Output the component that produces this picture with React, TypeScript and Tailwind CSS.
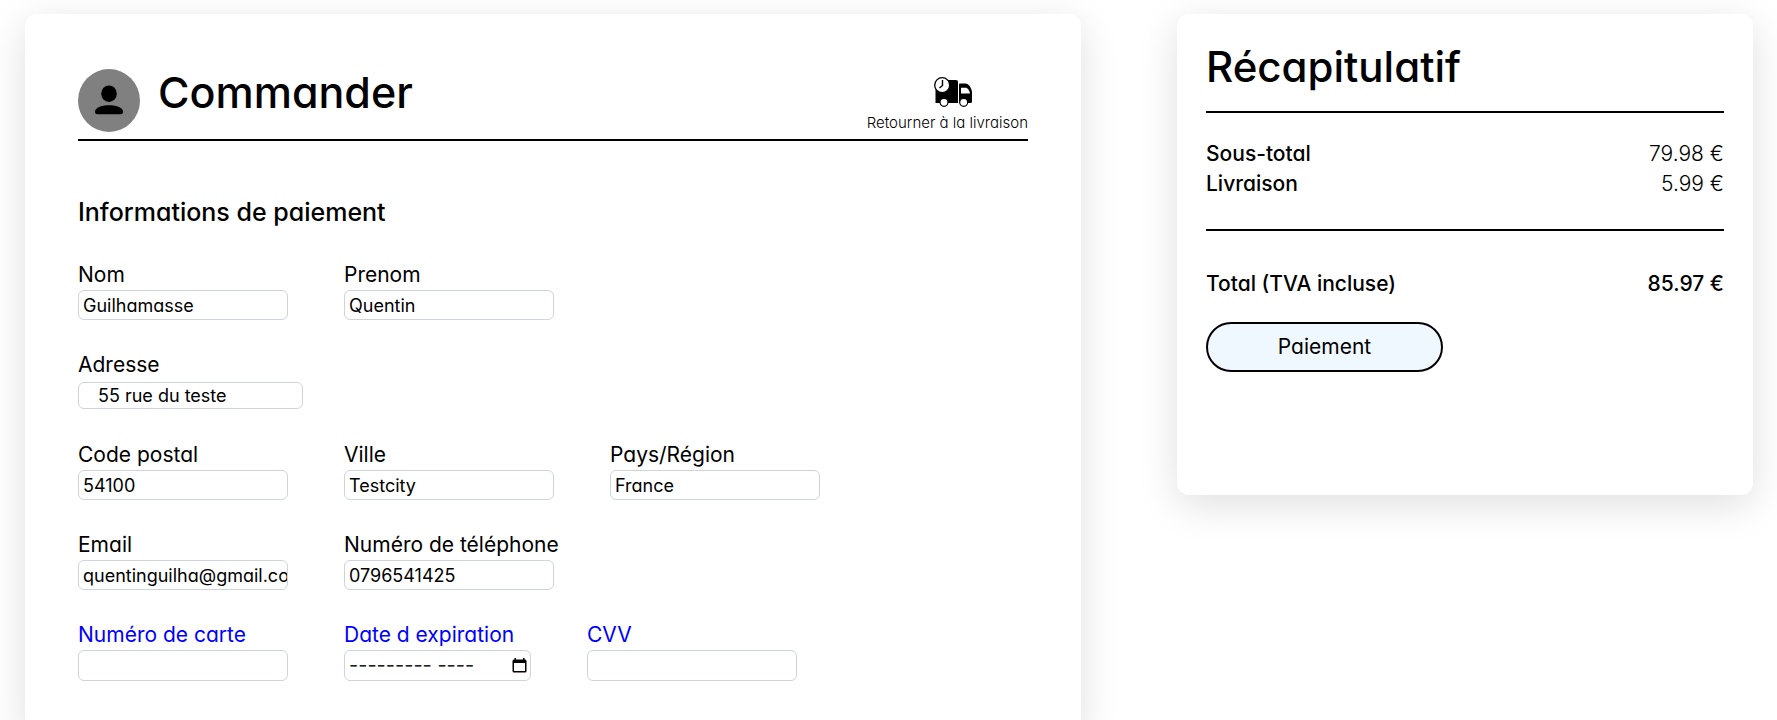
import type { InputHTMLAttributes, ReactNode } from "react";

type FieldProps = InputHTMLAttributes<HTMLInputElement> & {
  id: string;
  label: string;
  highlight?: boolean;
  adornment?: ReactNode;
};

function Field({
  id,
  label,
  highlight = false,
  adornment,
  className = "h-[30px] w-[210px] px-1",
  ...rest
}: FieldProps) {
  return (
    <div className="flex flex-col">
      <label
        htmlFor={id}
        className={
          highlight
            ? "h-[30px] w-0 text-[21px] leading-[29px] whitespace-nowrap text-[#0000ff]"
            : "h-[30px] w-0 text-[21px] leading-[29px] whitespace-nowrap text-black"
        }
      >
        {label}
      </label>
      <div className="relative flex h-[31px] flex-col">
        <input
          id={id}
          {...rest}
          className={`rounded-md border border-[#ced4da] bg-white text-lg font-[370] text-black placeholder:text-xl placeholder:font-normal placeholder:text-[#222222] ${className}`}
        />
        {adornment}
      </div>
    </div>
  );
}

function CalendarButton() {
  return (
    <button type="button" aria-label="Choisir une date" className="absolute top-2 right-1">
      <svg viewBox="0 0 15 15" className="size-[15px]" aria-hidden="true">
        <path d="M2.500 0H4V1.500H11V0H12.500V1.500H13Q14.500 1.500 14.500 3V13Q14.500 14.500 13 14.500H2Q0.500 14.500 0.500 13V3Q0.500 1.500 2 1.500H2.500ZM2 5V13H13V5Z" fill="#000" fillRule="evenodd" />
      </svg>
    </button>
  );
}

function TruckIcon() {
  return (
    <svg viewBox="0 0 38 30" className="ml-3 h-[30px] w-[38px]" aria-hidden="true">
      <path d="M1.5 5Q1.5 3 3.500 3H22Q24 3 24 5V26H1.500Z" fill="#000" />
      <path d="M25 7.500Q25 6.500 26 6.500H31.500C34.500 6.500 38 11.500 38 15.500V24.500Q38 26 36.500 26H25Z" fill="#000" />
      <path d="M27 10.800H31.500C33.500 10.800 35.500 13.500 36 16.500H27Z" fill="#fff" />
      <circle cx="8.200" cy="8.200" r="7.500" fill="#fff" stroke="#000" strokeWidth="1.300" />
      <path d="M8.500 3V8.500L5.500 11" fill="none" stroke="#000" strokeWidth="1.400" />
      <circle cx="10" cy="25.300" r="4" fill="#fff" stroke="#000" strokeWidth="1.200" />
      <circle cx="29.700" cy="25.300" r="4" fill="#fff" stroke="#000" strokeWidth="1.200" />
    </svg>
  );
}

function Avatar() {
  return (
    <svg viewBox="0 0 62 63" className="h-[63px] w-[62px]" role="img" aria-label="Profil">
      <ellipse cx="31" cy="31.500" rx="31" ry="31.500" fill="#808080" />
      <ellipse cx="31" cy="24.700" rx="7.800" ry="8.300" fill="#000" />
      <path d="M17 42.700C17 38.700 23 36.200 31 36.200S45 38.700 45 42.700Q45 45.200 42.500 45.200H19.500Q17 45.200 17 42.700Z" fill="#000" />
    </svg>
  );
}

export default function App() {
  return (
    <main className="grid h-screen grid-cols-[11fr_6fr] items-start gap-24 overflow-hidden bg-white pt-3.5 pr-6 pl-[25px] font-['Inter',sans-serif] text-black [font-feature-settings:'cv11']">
      <section className="min-h-screen rounded-xl bg-white px-[53px] pt-[55px] pb-12 shadow-[0_10px_40px_rgba(0,0,0,0.13)]">
        <header className="flex h-[72px] justify-between border-b-2 border-black">
          <div className="flex gap-[18px]">
            <Avatar />
            <h1 className="text-[43px] leading-[46px] font-medium">Commander</h1>
          </div>
          <a href="#livraison" className="flex flex-col items-center pt-2 text-[15px] font-[350]">
            <TruckIcon />
            <span className="leading-8">Retourner à la livraison</span>
          </a>
        </header>

        <form id="paiement" className="pt-[55px]">
          <h2 className="text-[25px] leading-8 font-medium">Informations de paiement</h2>
          <div className="flex flex-col gap-[29px] pt-8">
            <div className="flex gap-14">
              <Field id="nom" label="Nom" defaultValue="Guilhamasse" />
              <Field id="prenom" label="Prenom" defaultValue="Quentin" />
            </div>
            <Field id="adresse" label="Adresse" defaultValue="55 rue du teste" className="my-0.5 h-[27px] w-[225px] px-[19px]" />
            <div className="flex gap-14">
              <Field id="code" label="Code postal" defaultValue="54100" />
              <Field id="ville" label="Ville" defaultValue="Testcity" />
              <Field id="pays" label="Pays/Région" defaultValue="France" />
            </div>
            <div className="flex gap-14">
              <Field id="email" label="Email" defaultValue="quentinguilha@gmail.com" className="h-[30px] w-[210px] pl-1" />
              <Field id="tel" label="Numéro de téléphone" type="tel" defaultValue="0796541425" />
            </div>
            <div className="flex gap-14">
              <Field id="carte" label="Numéro de carte" highlight className="h-[31px] w-[210px] px-1" />
              <Field
                id="date"
                label="Date d expiration"
                placeholder="--------- ----"
                highlight
                adornment={<CalendarButton />}
                className="h-[31px] w-[187px] pr-6 pl-1"
              />
              <Field id="cvv" label="CVV" highlight className="h-[31px] w-[210px] px-1" />
            </div>
          </div>
        </form>
      </section>

      <aside className="h-[481px] rounded-xl bg-white px-[29px] pt-7 shadow-[0_10px_40px_rgba(0,0,0,0.13)]">
        <h1 className="h-[71px] border-b-2 border-black text-[42px] leading-[50px] font-medium">Récapitulatif</h1>
        <dl className="border-b-2 border-black pt-[26px] pb-[30px] text-[21px] leading-[30px]">
          <div className="flex justify-between">
            <dt className="font-medium">Sous-total</dt>
            <dd className="font-[350]">79.98 €</dd>
          </div>
          <div className="flex justify-between">
            <dt className="font-medium">Livraison</dt>
            <dd className="font-[350]">5.99 €</dd>
          </div>
        </dl>
        <div className="flex justify-between pt-[38px] text-[21px] leading-[30px] font-medium">
          <span>Total (TVA incluse)</span>
          <span>85.97 €</span>
        </div>
        <button
          type="submit"
          form="paiement"
          className="mt-[23px] h-[50px] w-[237px] rounded-full border-2 border-black bg-[#f0f8ff] text-[21px]"
        >
          Paiement
        </button>
      </aside>
    </main>
  );
}
